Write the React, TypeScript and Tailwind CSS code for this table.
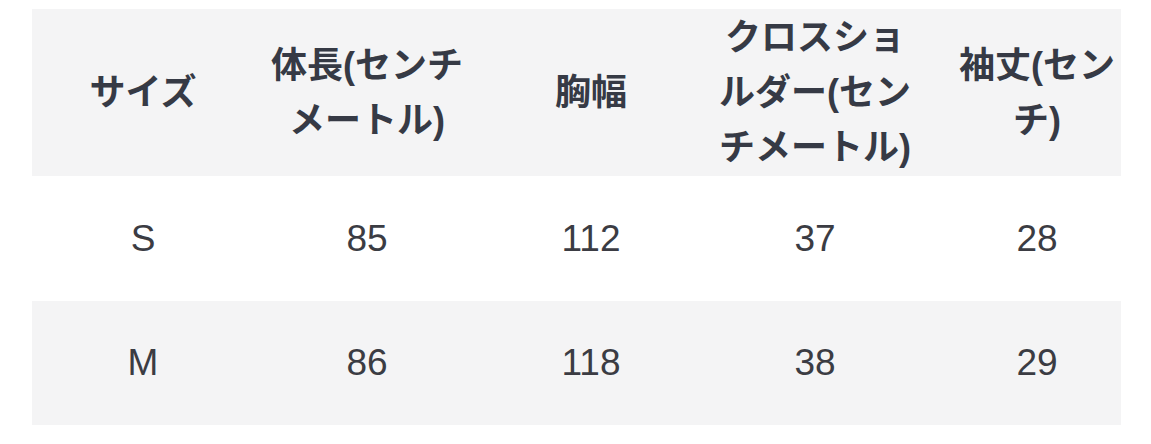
import React from "react";

const cols = "grid grid-cols-[222px_226px_222px_226px_193px]";

function H({ lines, last }: { lines: string[]; last?: boolean }) {
  return (
    <div className={`flex flex-col items-center justify-center text-center ${last ? "pl-[25px]" : ""}`}>
      {lines.map((l, i) => (
        <div key={i} className="leading-[55px] whitespace-nowrap">
          {l}
        </div>
      ))}
    </div>
  );
}

function C({ v, last }: { v: string; last?: boolean }) {
  return (
    <div className={`flex items-center justify-center ${last ? "pl-[25px]" : ""}`}>{v}</div>
  );
}

export default function App() {
  const rows = [
    ["S", "85", "112", "37", "28"],
    ["M", "86", "118", "38", "29"],
  ];
  return (
    <div
      className="w-[1151px] h-[444px] bg-white pt-[9px] pl-[32px] text-[#363a45]"
      style={{ fontFamily: '"Liberation Sans", "Noto Sans CJK JP", sans-serif' }}
    >
      <div className="w-[1089px]">
        <div className={`${cols} h-[167px] bg-[#f4f4f5] text-[36px] font-bold`}>
          <H lines={["サイズ"]} />
          <H lines={["体長(センチ", "メートル)"]} />
          <H lines={["胸幅"]} />
          <H lines={["クロスショ", "ルダー(セン", "チメートル)"]} />
          <H lines={["袖丈(セン", "チ)"]} last />
        </div>
        {rows.map((r, i) => (
          <div
            key={i}
            className={`${cols} ${i === 0 ? "h-[125px] bg-white" : "h-[124px] bg-[#f4f4f5]"} text-[37px] text-[#3b3c43]`}
          >
            {r.map((v, j) => (
              <C key={j} v={v} last={j === 4} />
            ))}
          </div>
        ))}
      </div>
    </div>
  );
}
